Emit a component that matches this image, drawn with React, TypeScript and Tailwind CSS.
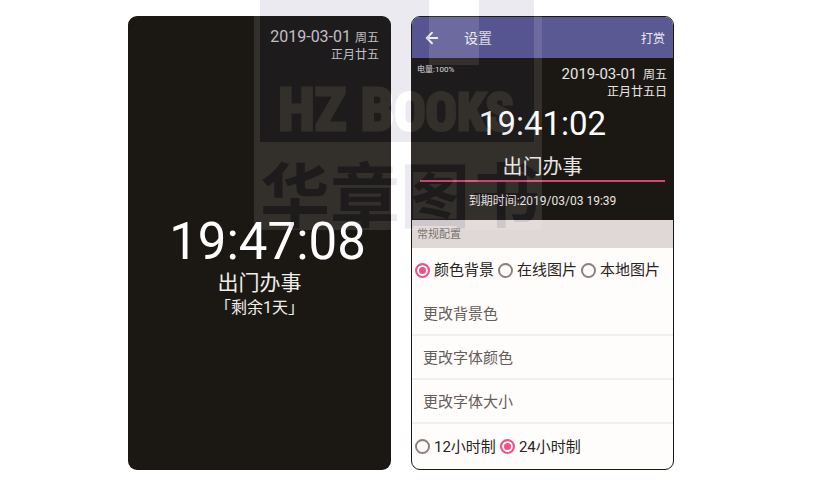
import { ArrowLeft } from "lucide-react";

const CJK = "font-['Roboto','Noto_Sans_CJK_SC',sans-serif]";

const backgroundOptions = ["颜色背景", "在线图片", "本地图片"];
const hourOptions = ["12小时制", "24小时制"];
const actions = ["更改背景色", "更改字体颜色", "更改字体大小"];

interface RadioRowProps {
  name: string;
  options: string[];
  selected: number;
  className: string;
}

function RadioRow({ name, options, selected, className }: RadioRowProps) {
  return (
    <div className={`flex items-center gap-1 pl-[3px] whitespace-nowrap ${className}`}>
      {options.map((option, i) => (
        <label key={option} className="flex items-center gap-1 text-[15px] leading-5 text-[#292321]">
          <input
            type="radio"
            name={name}
            defaultChecked={i === selected}
            className="size-[15px] shrink-0 appearance-none rounded-full border-2 border-[#8b807e] bg-[#fefdfc] checked:border-[#ef5285] checked:bg-[#ef5285] checked:shadow-[inset_0_0_0_2px_#fefdfc]"
          />
          {option}
        </label>
      ))}
    </div>
  );
}

function ClockScreen() {
  return (
    <section className="flex flex-col items-center rounded-[9px] bg-[#1b1813] pt-3 text-[#f0eeec]">
      <div className="self-end pr-3 text-right text-[#d2cfcf]">
        <p className="text-base leading-[18px]">
          2019-03-01 <span className="text-xs">周五</span>
        </p>
        <p className="text-xs leading-[18px]">正月廿五</p>
      </div>
      <time className="mt-[150px] pl-4 text-[51px] leading-[56px] text-white">19:47:08</time>
      <h1 className="text-[21px] leading-[26px]">出门办事</h1>
      <p className="text-base leading-6">「剩余1天」</p>
    </section>
  );
}

function SettingsScreen() {
  return (
    <section className="overflow-hidden rounded-[9px] border border-[#1b1813] bg-[#fefdfc]">
      <header className="flex h-[41px] items-center bg-[#5b5994] pr-2 pl-[11px] text-[#eeebf2]">
        <button type="button" aria-label="返回">
          <ArrowLeft className="size-[18px]" strokeWidth={2.5} />
        </button>
        <h2 className="ml-[23px] text-sm">设置</h2>
        <button type="button" className="ml-auto pt-0.5 text-xs">
          打赏
        </button>
      </header>

      <div className="h-[162px] bg-[#1b1813] text-[#e8e5e3]">
        <div className="flex justify-between pt-[7px] pr-1.5 pl-[5px]">
          <p className="text-[8px] leading-[10px]">电量:100%</p>
          <div className="text-right">
            <p className="text-[15px] leading-[18px]">
              2019-03-01 <span className="ml-0.5 text-xs">周五</span>
            </p>
            <p className="text-xs leading-[18px]">正月廿五日</p>
          </div>
        </div>
        <time className="block text-center text-[33px] leading-[46px] text-white">19:41:02</time>
        <div className="px-2">
          <input
            aria-label="事件"
            defaultValue="出门办事"
            className="block h-[35px] w-full border-b-2 border-[#dd4475] pt-1 text-center text-xl outline-none"
          />
        </div>
        <p className="mt-[9px] text-center text-xs leading-5">到期时间:2019/03/03 19:39</p>
      </div>

      <h3 className="bg-[#e0d8d6] px-[5px] pt-0.5 text-[11px] leading-[26px] text-[#7b7270]">常规配置</h3>
      <RadioRow name="background" options={backgroundOptions} selected={0} className="h-11" />
      {actions.map((action) => (
        <button
          key={action}
          type="button"
          className="block h-11 w-full border-b-2 border-[#f1efee] pt-0.5 pl-[11px] text-left text-[15px] text-[#665c5a]"
        >
          {action}
        </button>
      ))}
      <RadioRow name="hours" options={hourOptions} selected={1} className="h-[45px]" />
    </section>
  );
}

function Watermark() {
  return (
    <svg
      className="pointer-events-none absolute top-0 left-[254px] opacity-10"
      width="288"
      height="230"
      viewBox="0 0 288 230"
      aria-hidden="true"
    >
      <rect width="288" height="230" fill="#fff" />
      <path d="M6 0H175V65H225V0H280V142H6Z" fill="#393978" />
      <text
        x="24"
        y="130"
        fill="#fff"
        stroke="#fff"
        strokeWidth="3"
        className="font-['Roboto_Condensed','Roboto',sans-serif] text-[60px] font-bold"
      >
        HZ B<tspan className="text-[52px]">OOKS</tspan>
      </text>
      <text
        x="6"
        y="222"
        fill="#393978"
        className="font-['Noto_Sans_CJK_SC',sans-serif] text-[70px] font-bold"
      >
        华章图书
      </text>
    </svg>
  );
}

export default function App() {
  return (
    <main className={`relative min-h-screen bg-white pt-4 pr-[152px] pb-4 pl-32 ${CJK}`}>
      <div className="grid grid-cols-2 gap-5">
        <ClockScreen />
        <SettingsScreen />
      </div>
      <Watermark />
    </main>
  );
}
